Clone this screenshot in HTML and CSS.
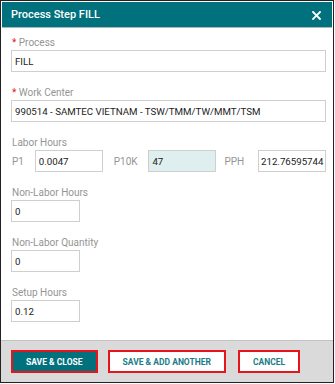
FILE: index.html
```html
<!DOCTYPE html>
<html lang="en">
<head>
  <meta charset="UTF-8" />
  <title>Process Step FILL</title>
  <link rel="stylesheet" href="styles.css">
</head>
<body>
  <div class="dialog">
    <header class="dialog-head">
      <h1>Process Step FILL</h1>
      <svg class="close" width="9" height="9" viewBox="0 0 9 9">
        <path d="M1 1 L8 8 M8 1 L1 8" stroke="#fff" stroke-width="1.8" stroke-linecap="square"/>
      </svg>
    </header>

    <main class="dialog-body">
      <div class="field">
        <label><span class="req">*</span> Process</label>
        <input class="text wide" value="FILL">
      </div>

      <div class="field">
        <label><span class="req">*</span> Work Center</label>
        <input class="text wide" value="990514 - SAMTEC VIETNAM - TSW/TMM/TW/MMT/TSM">
      </div>

      <div class="field">
        <label>Labor Hours</label>
        <div class="labor-row">
          <span class="lbl lbl-p1">P1</span>
          <input class="text mid" value="0.0047">
          <span class="lbl lbl-p10k">P10K</span>
          <input class="text mid readonly" value="47" readonly>
          <span class="lbl lbl-pph">PPH</span>
          <input class="text mid pph" value="212.76595744">
        </div>
      </div>

      <div class="field">
        <label>Non-Labor Hours</label>
        <input class="text short" value="0">
      </div>

      <div class="field">
        <label>Non-Labor Quantity</label>
        <input class="text short" value="0">
      </div>

      <div class="field">
        <label>Setup Hours</label>
        <input class="text short" value="0.12">
      </div>
    </main>

    <footer class="dialog-foot">
      <button class="btn primary">SAVE &amp; CLOSE</button>
      <button class="btn">SAVE &amp; ADD ANOTHER</button>
      <button class="btn">CANCEL</button>
    </footer>
  </div>
</body>
</html>
```

FILE: styles.css
```css
* { box-sizing: border-box; }
body {
  margin: 0;
  background: #fff;
  font-family: Roboto, "Liberation Sans", sans-serif;
  color: #222;
}
.dialog {
  width: 334px;
  height: 383px;
  border: 1px solid #222;
  padding: 1px 1px 0 1px;
  display: flex;
  flex-direction: column;
  background: #fff;
}
.dialog-head {
  height: 26px;
  background: #00717d;
  border-bottom: 1px solid #a9b9bb;
  display: flex;
  align-items: center;
  justify-content: space-between;
  padding: 0 11px 0 9px;
}
.dialog-head h1 {
  margin: 0;
  color: #fff;
  font-size: 11px;
  font-weight: 500;
}
.close { display: block; margin-top: 1px; }
.dialog-body {
  flex: 1;
  padding: 8px 6px 0 9px;
}
.field { margin-bottom: 14px; }
.field label {
  display: block;
  height: 14px;
  line-height: 14px;
  font-size: 10px;
  color: #959595;
  padding-left: 1px;
}
.req { color: #e02020; }
.text {
  display: block;
  height: 22px;
  border: 1px solid #cfcfcf;
  padding: 0 3px;
  font-family: inherit;
  font-size: 9.7px;
  color: #222;
  background: #fff;
  outline: none;
}
.wide { width: 100%; }
.short { width: 69px; }
.mid { width: 68px; }
.pph { padding: 0 1px 0 2px; }
.readonly { background: #dfeeee; }
.labor-row {
  display: flex;
  align-items: center;
}
.lbl {
  font-size: 10px;
  color: #959595;
}
.lbl-p1 { width: 24px; padding-left: 1px; }
.lbl-p10k { width: 35px; margin-left: 11px; }
.lbl-pph { width: 34px; margin-left: 8px; }
.dialog-foot {
  height: 42px;
  background: #dadada;
  border-top: 1px solid #c2c2c2;
  margin: 0 -1px;
  padding: 9px 0 0 10px;
  display: flex;
  gap: 10px;
  align-items: flex-start;
}
.btn {
  height: 23px;
  border: 2px solid #e8141c;
  background: #fff;
  color: #1b7c87;
  font-family: inherit;
  font-size: 8.5px;
  font-weight: 700;
  padding: 0 13px;
}
.btn + .btn + .btn { margin-left: 2px; }
.btn.primary {
  background: #00717d;
  color: #fff;
}
```
